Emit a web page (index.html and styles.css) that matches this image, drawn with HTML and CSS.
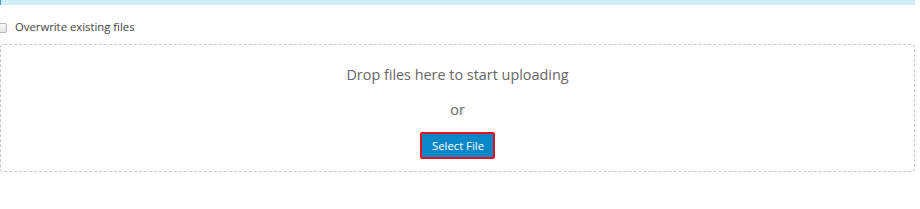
FILE: index.html
```html
<!DOCTYPE html>
<html>
<head>
<meta charset="utf-8">
<link rel="stylesheet" href="styles.css">
</head>
<body>
<div class="page">
  <div class="notice"></div>
  <label class="overwrite">
    <span class="check"></span>
    <span class="overwrite-label">Overwrite existing files</span>
  </label>
  <div class="dropzone">
    <p class="drop-text">Drop files here to start uploading</p>
    <p class="or-text">or</p>
    <button class="select-btn" type="button">Select File</button>
  </div>
</div>
</body>
</html>
```

FILE: styles.css
```css
html, body {
  margin: 0;
  padding: 0;
  background: #ffffff;
}

body {
  font-family: "Open Sans", "Liberation Sans", sans-serif;
  color: #555;
}

.page {
  width: 915px;
}

.notice {
  height: 5px;
  background: #d2ecf8;
  border-left: 1px solid #3aa2d6;
}

.overwrite {
  display: flex;
  align-items: center;
  height: 14px;
  padding-top: 15px;
  font-size: 11.3px;
  line-height: 14px;
  color: #444;
}

.check {
  box-sizing: border-box;
  width: 10px;
  height: 10px;
  margin: 1px 8px 0 -3px;
  border: 1px solid #b8b8b8;
  border-radius: 2px;
  background: linear-gradient(#fafafa, #e6e6e6);
}

.dropzone {
  box-sizing: border-box;
  height: 128px;
  margin-top: 10px;
  border: 1px dashed #c8c8c8;
  border-radius: 4px;
  display: flex;
  flex-direction: column;
  align-items: center;
  padding-top: 20px;
}

.drop-text {
  margin: 0;
  font-size: 14.4px;
  color: #666;
  line-height: 20px;
}

.or-text {
  margin: 15px 0 0;
  font-size: 14.4px;
  color: #666;
  line-height: 20px;
}

.select-btn {
  margin-top: 12px;
  box-sizing: border-box;
  height: 27px;
  padding: 0 9px 0 10px;
  background: #0a86c9;
  color: #fff;
  border: 2px solid #e0121b;
  border-radius: 2px;
  font-family: "Open Sans", "Liberation Sans", sans-serif;
  font-size: 11.3px;
}
```
